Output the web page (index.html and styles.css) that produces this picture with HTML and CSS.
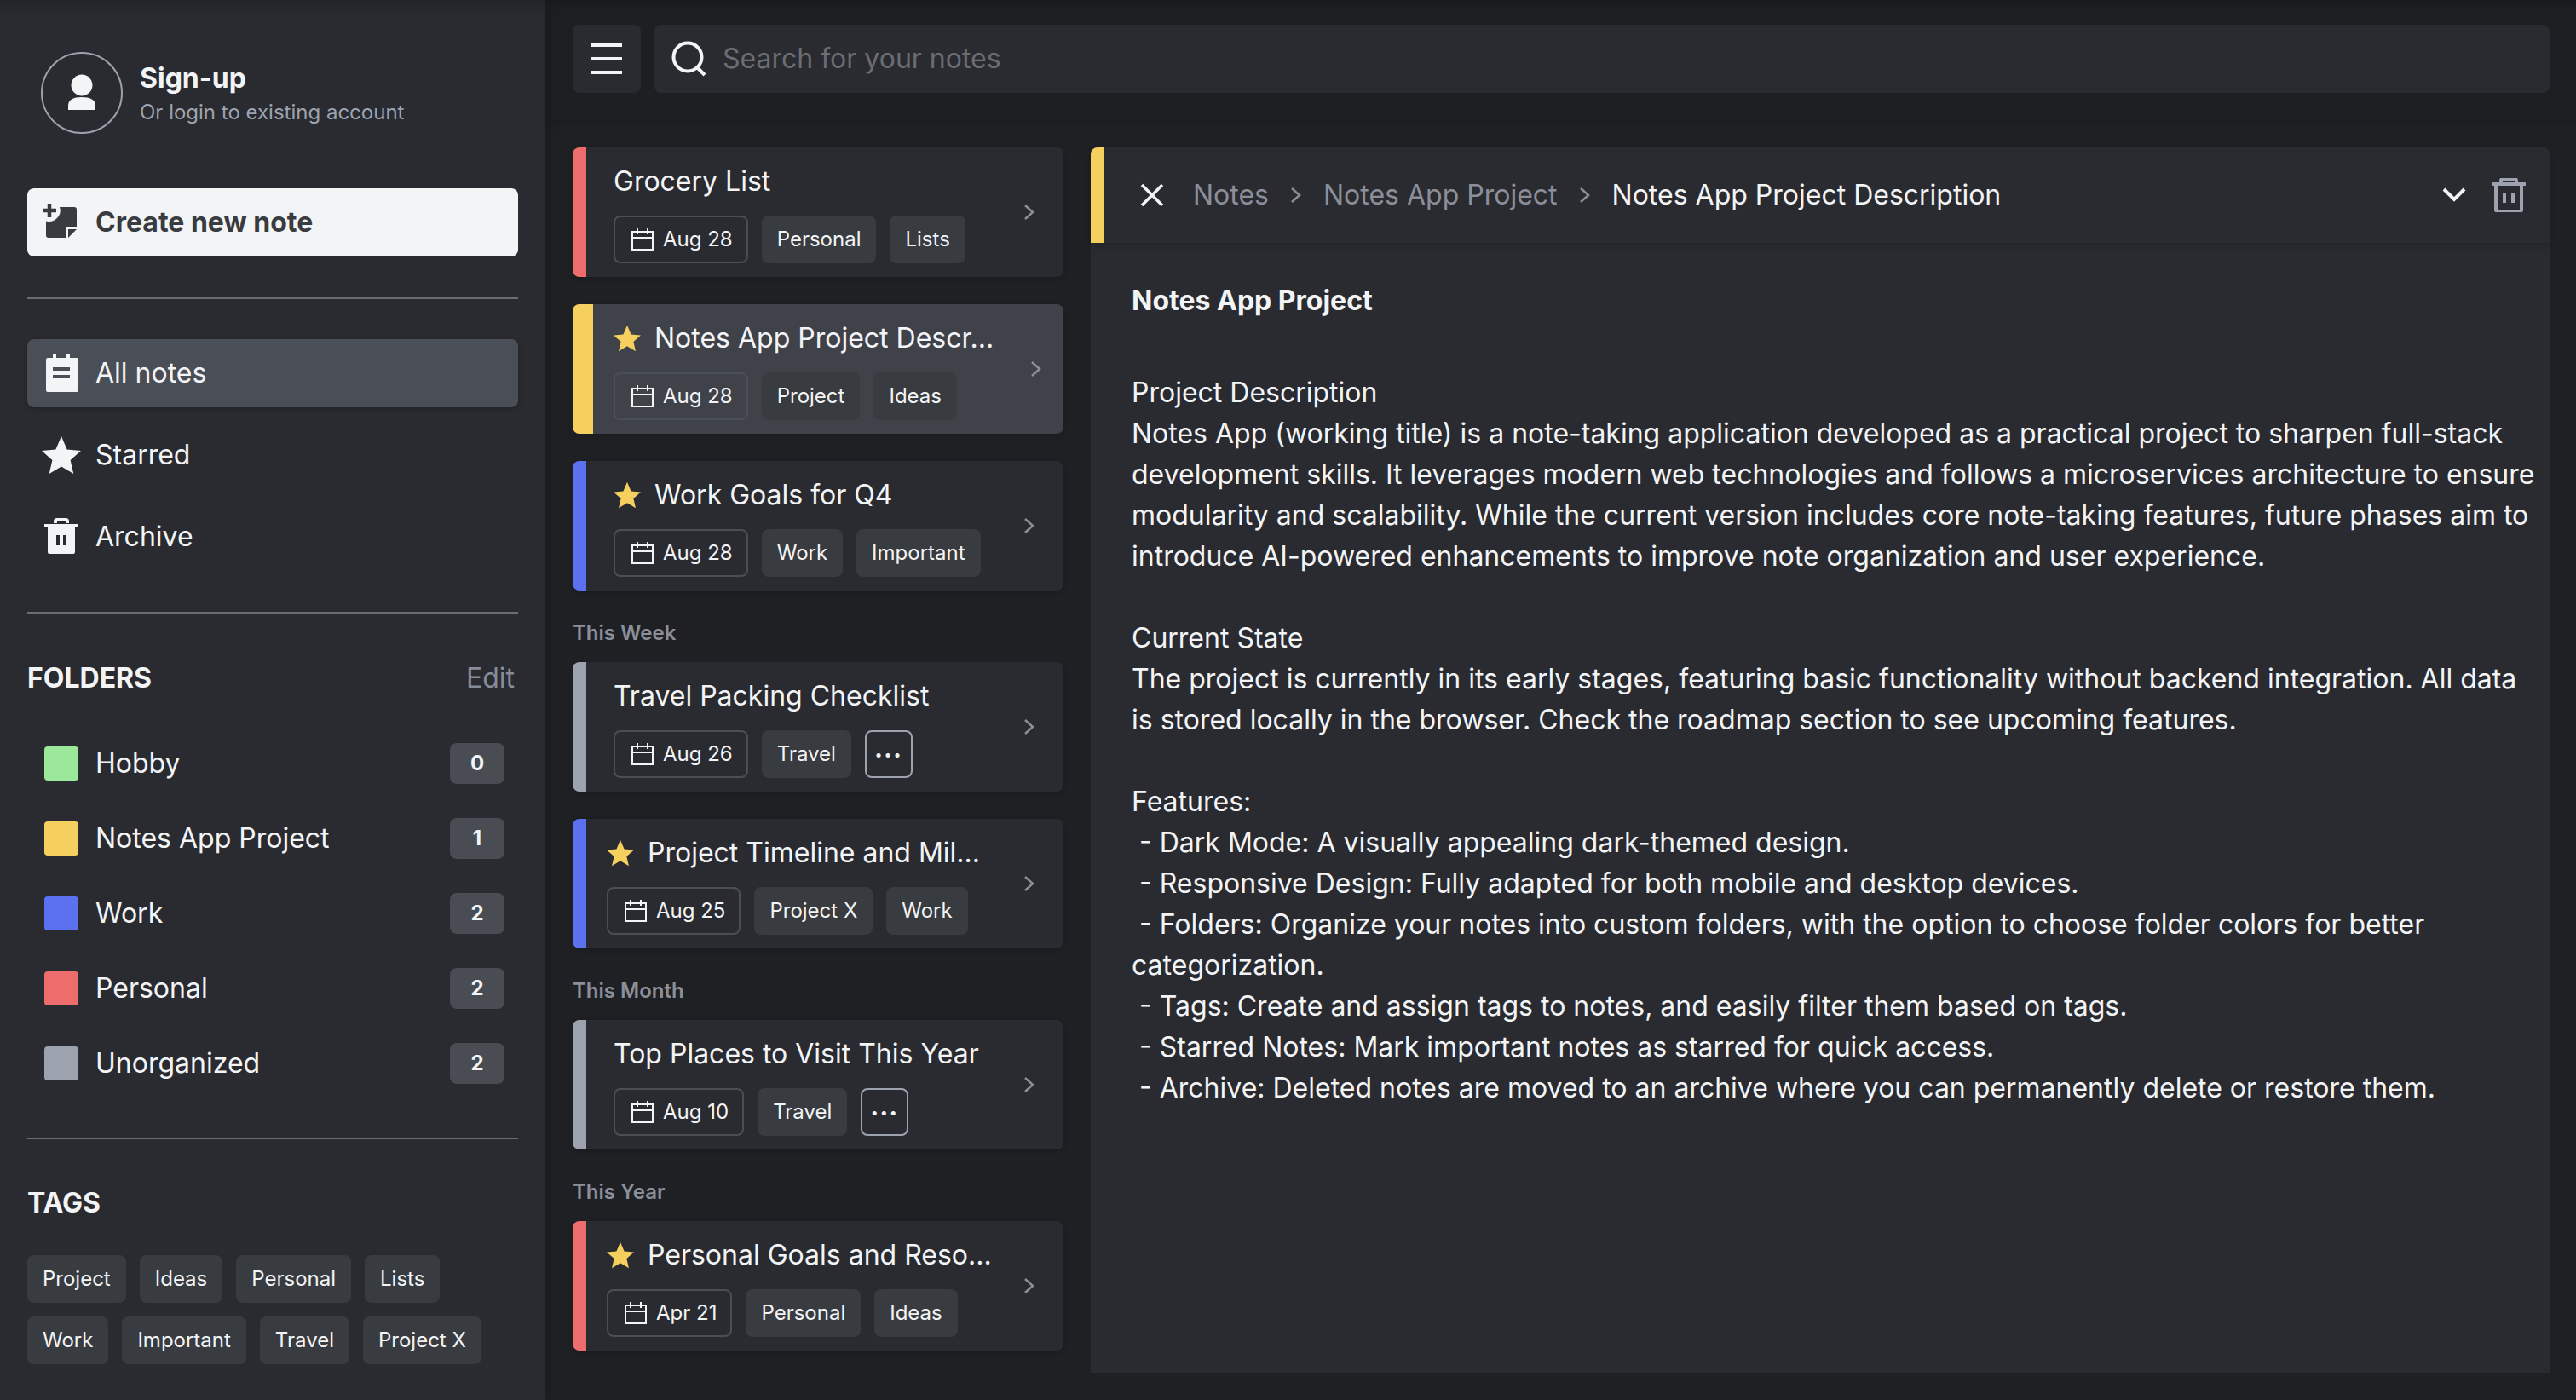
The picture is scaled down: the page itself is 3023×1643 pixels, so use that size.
FILE: index.html
```html
<!DOCTYPE html>
<html lang="en">
<head>
<meta charset="utf-8">
<title>Notes App</title>
<link rel="stylesheet" href="styles.css">
</head>
<body>
<svg class="defs" width="0" height="0" aria-hidden="true">
  <defs>
    <symbol id="star" viewBox="0 0 46 44"><path d="M23 0l6.6 15.4 16.4 1.5-12.4 11 3.700 16.100L23 35.400 8.700 44l3.700-16.100L0 16.900l16.400-1.500z"/></symbol>
    <symbol id="cal" viewBox="0 0 32 32"><path d="M4 7h24v21H4zM4 14h24M10 3v7M22 3v7" fill="none" stroke="currentColor" stroke-width="2"/></symbol>
    <symbol id="chev" viewBox="0 0 32 32"><path d="M11 8l9 8-9 8" fill="none" stroke="#8b8f99" stroke-width="2.500"/></symbol>
  </defs>
</svg>
<div class="app">
  <aside class="sidebar">
    <div class="profile">
      <div class="avatar">
        <svg viewBox="0 0 48 48" width="48" height="48"><circle cx="24" cy="15" r="12.500" fill="#f3f4f6"/><path d="M8 44v-5c0-7 6-10 16-10s16 3 16 10v5z" fill="#f3f4f6"/></svg>
      </div>
      <div class="profile-text">
        <div class="profile-name">Sign-up</div>
        <div class="profile-sub">Or login to existing account</div>
      </div>
    </div>
    <button class="create">
      <svg viewBox="0 0 48 48" width="48" height="48"><path d="M22 6H39a3 3 0 0 1 3 3V29H29V42H9a3 3 0 0 1-3-3V22.400A13 13 0 0 0 22 6z" fill="#383b40"/><path d="M2 10h16M10 2v16" stroke="#383b40" stroke-width="4.500" fill="none"/><path d="M32 32h10L32 42z" fill="#383b40"/></svg>
      <span>Create new note</span>
    </button>
    <hr class="rule rule-a">
    <nav class="nav">
      <a class="nav-item is-active">
        <svg viewBox="0 0 48 48" width="48" height="48"><path d="M14 2h4v4h12V2h4v4h8a2 2 0 0 1 2 2v36a2 2 0 0 1-2 2H8a2 2 0 0 1-2-2V8a2 2 0 0 1 2-2h6z" fill="#f3f4f6"/><path d="M14 19h20M14 28h20" stroke="#4a4e56" stroke-width="4"/></svg>
        <span>All notes</span>
      </a>
      <a class="nav-item">
        <svg viewBox="0 0 46 44" width="46" height="44"><use href="#star" fill="#f3f4f6"/></svg>
        <span>Starred</span>
      </a>
      <a class="nav-item">
        <svg viewBox="0 0 48 48" width="48" height="48"><path d="M17 8V6a2 2 0 0 1 2-2h10a2 2 0 0 1 2 2v2" fill="none" stroke="#f3f4f6" stroke-width="4"/><path d="M4 9h40v4H4z" fill="#f3f4f6"/><path fill-rule="evenodd" d="M8 13h32v29a2 2 0 0 1-2 2H10a2 2 0 0 1-2-2zM18 22v12h4V22zM26 22v12h4V22z" fill="#f3f4f6"/></svg>
        <span>Archive</span>
      </a>
    </nav>
    <hr class="rule rule-b">
    <div class="section-head">
      <span class="section-title">FOLDERS</span>
      <span class="section-edit">Edit</span>
    </div>
    <ul class="folders">
      <li class="folder"><i class="swatch c-green"></i><span class="folder-name">Hobby</span><b class="count">0</b></li>
      <li class="folder"><i class="swatch c-yellow"></i><span class="folder-name">Notes App Project</span><b class="count">1</b></li>
      <li class="folder"><i class="swatch c-blue"></i><span class="folder-name">Work</span><b class="count">2</b></li>
      <li class="folder"><i class="swatch c-red"></i><span class="folder-name">Personal</span><b class="count">2</b></li>
      <li class="folder"><i class="swatch c-gray"></i><span class="folder-name">Unorganized</span><b class="count">2</b></li>
    </ul>
    <hr class="rule rule-c">
    <div class="section-title tags-title">TAGS</div>
    <div class="tag-cloud">
      <span class="tag">Project</span><span class="tag">Ideas</span><span class="tag">Personal</span><span class="tag">Lists</span>
      <span class="tag">Work</span><span class="tag">Important</span><span class="tag">Travel</span><span class="tag">Project X</span>
    </div>
  </aside>
  <div class="main">
    <header class="topbar">
      <button class="burger"><svg viewBox="0 0 36 36" width="36" height="36"><path d="M0 2h36M0 18h36M0 34h36" stroke="#f3f4f6" stroke-width="4"/></svg></button>
      <div class="search">
        <svg viewBox="0 0 42 42" width="42" height="42"><circle cx="19" cy="19" r="16.500" fill="none" stroke="#f3f4f6" stroke-width="4"/><path d="M30 31l9 9" stroke="#f3f4f6" stroke-width="4"/></svg>
        <span class="placeholder">Search for your notes</span>
      </div>
    </header>
    <div class="content">
      <section class="list">
        <article class="card">
          <i class="stripe c-red"></i>
          <div class="card-body">
            <div class="card-title">Grocery List</div>
            <div class="chips"><span class="date"><svg width="32" height="32"><use href="#cal"/></svg>Aug 28</span><span class="tag">Personal</span><span class="tag">Lists</span></div>
          </div>
          <svg class="chev" width="32" height="32"><use href="#chev"/></svg>
        </article>
        <article class="card is-selected">
          <i class="stripe stripe-wide c-yellow"></i>
          <div class="card-body tight">
            <div class="card-title"><svg class="star" width="32" height="32"><use href="#star"/></svg>Notes App Project Descr...</div>
            <div class="chips"><span class="date"><svg width="32" height="32"><use href="#cal"/></svg>Aug 28</span><span class="tag">Project</span><span class="tag">Ideas</span></div>
          </div>
          <svg class="chev" width="32" height="32"><use href="#chev"/></svg>
        </article>
        <article class="card">
          <i class="stripe c-blue"></i>
          <div class="card-body">
            <div class="card-title"><svg class="star" width="32" height="32"><use href="#star"/></svg>Work Goals for Q4</div>
            <div class="chips"><span class="date"><svg width="32" height="32"><use href="#cal"/></svg>Aug 28</span><span class="tag">Work</span><span class="tag">Important</span></div>
          </div>
          <svg class="chev" width="32" height="32"><use href="#chev"/></svg>
        </article>
        <h3 class="group">This Week</h3>
        <article class="card">
          <i class="stripe c-gray"></i>
          <div class="card-body">
            <div class="card-title">Travel Packing Checklist</div>
            <div class="chips"><span class="date"><svg width="32" height="32"><use href="#cal"/></svg>Aug 26</span><span class="tag">Travel</span><span class="more">&#8226;&#8226;&#8226;</span></div>
          </div>
          <svg class="chev" width="32" height="32"><use href="#chev"/></svg>
        </article>
        <article class="card">
          <i class="stripe c-blue"></i>
          <div class="card-body tight">
            <div class="card-title"><svg class="star" width="32" height="32"><use href="#star"/></svg>Project Timeline and Mil...</div>
            <div class="chips"><span class="date"><svg width="32" height="32"><use href="#cal"/></svg>Aug 25</span><span class="tag">Project X</span><span class="tag">Work</span></div>
          </div>
          <svg class="chev" width="32" height="32"><use href="#chev"/></svg>
        </article>
        <h3 class="group">This Month</h3>
        <article class="card">
          <i class="stripe c-gray"></i>
          <div class="card-body">
            <div class="card-title">Top Places to Visit This Year</div>
            <div class="chips"><span class="date"><svg width="32" height="32"><use href="#cal"/></svg>Aug 10</span><span class="tag">Travel</span><span class="more">&#8226;&#8226;&#8226;</span></div>
          </div>
          <svg class="chev" width="32" height="32"><use href="#chev"/></svg>
        </article>
        <h3 class="group">This Year</h3>
        <article class="card">
          <i class="stripe c-red"></i>
          <div class="card-body tight">
            <div class="card-title"><svg class="star" width="32" height="32"><use href="#star"/></svg>Personal Goals and Reso...</div>
            <div class="chips"><span class="date"><svg width="32" height="32"><use href="#cal"/></svg>Apr 21</span><span class="tag">Personal</span><span class="tag">Ideas</span></div>
          </div>
          <svg class="chev" width="32" height="32"><use href="#chev"/></svg>
        </article>
      </section>
      <section class="detail">
        <header class="detail-head">
          <i class="stripe c-yellow"></i>
          <div class="crumbs">
            <svg class="close" viewBox="0 0 32 32" width="32" height="32"><path d="M4 4l24 24M28 4L4 28" stroke="#f3f4f6" stroke-width="3.500"/></svg>
            <span class="crumb">Notes</span>
            <svg width="32" height="32" class="sep"><use href="#chev"/></svg>
            <span class="crumb">Notes App Project</span>
            <svg width="32" height="32" class="sep"><use href="#chev"/></svg>
            <span class="crumb crumb-current">Notes App Project Description</span>
          </div>
          <svg class="down" viewBox="0 0 32 32" width="32" height="32"><path d="M4 9l12 12 12-12" fill="none" stroke="#f3f4f6" stroke-width="4"/></svg>
          <svg class="trash" viewBox="0 0 40 40" width="40" height="40"><path d="M11 5V3a2 2 0 0 1 2-2h14a2 2 0 0 1 2 2v2M0 7h40M5 7v30a2 2 0 0 0 2 2h26a2 2 0 0 0 2-2V7M15 17v12M25 17v12" fill="none" stroke="#9ca3af" stroke-width="4"/></svg>
        </header>
        <div class="detail-body"><strong class="doc-title">Notes App Project</strong>
Project Description
Notes App (working title) is a note-taking application developed as a practical project to sharpen full-stack development skills. It leverages modern web technologies and follows a microservices architecture to ensure modularity and scalability. While the current version includes core note-taking features, future phases aim to introduce AI-powered enhancements to improve note organization and user experience.

Current State
The project is currently in its early stages, featuring basic functionality without backend integration. All data is stored locally in the browser. Check the roadmap section to see upcoming features.

Features:
 - Dark Mode: A visually appealing dark-themed design.
 - Responsive Design: Fully adapted for both mobile and desktop devices.
 - Folders: Organize your notes into custom folders, with the option to choose folder colors for better categorization.
 - Tags: Create and assign tags to notes, and easily filter them based on tags.
 - Starred Notes: Mark important notes as starred for quick access.
 - Archive: Deleted notes are moved to an archive where you can permanently delete or restore them.</div>
      </section>
    </div>
  </div>
</div>
</body>
</html>
```
FILE: styles.css
```css
* { box-sizing: border-box; }
html, body { margin: 0; height: 100%; }
body {
  background: #1f2024;
  color: #f3f4f6;
  font-family: Inter, "Liberation Sans", sans-serif;
  font-size: 32px;
  line-height: 48px;
  overflow: hidden;
}
.defs { position: absolute; }
.app { display: flex; height: 1643px; }

.c-red { background: #ec6d6b; }
.c-yellow { background: #f6d05e; }
.c-blue { background: #5b71f0; }
.c-gray { background: #9ca3af; }
.c-green { background: #9be89b; }

/* Sidebar */
.sidebar {
  width: 640px;
  flex: none;
  padding: 62px 32px 0;
  background: #2a2b30;
  box-shadow: inset 0 22px 22px -22px rgba(0,0,0,.35), 4px 0 10px rgba(0,0,0,.15);
  display: flex;
  flex-direction: column;
  position: relative;
  z-index: 2;
}
.profile { display: flex; align-items: center; gap: 20px; margin-left: 16px; height: 94px; }
.avatar {
  width: 96px; height: 96px; flex: none;
  border: 2px solid #9ca3af; border-radius: 50%;
  display: flex; align-items: center; justify-content: center;
}
.profile-text { padding-top: 3px; }
.profile-name { font-size: 32px; font-weight: 700; line-height: 40px; }
.profile-sub { font-size: 24px; line-height: 36px; color: #9ca3af; margin-top: 2px; }
.create {
  margin-top: 65px;
  height: 80px;
  display: flex; align-items: center; gap: 16px;
  padding: 0 16px;
  border: 0; border-radius: 8px;
  background: #f3f4f6; color: #383b40;
  font: 650 32px/48px Inter, sans-serif;
}
.rule { width: 100%; height: 2px; margin: 0; border: 0; background: #6a6d75; flex: none; }
.rule-a { margin-top: 48px; }
.rule-b { margin-top: 48px; }
.rule-c { margin-top: 63px; }
.nav { display: flex; flex-direction: column; gap: 16px; margin-top: 47px; }
.nav-item { display: flex; align-items: center; gap: 16px; height: 80px; padding: 0 16px; border-radius: 8px; }
.nav-item svg { width: 48px; flex: none; }
.nav-item.is-active { background: #4a4e56; box-shadow: 0 2px 6px rgba(0,0,0,.2); }
.section-head { display: flex; justify-content: space-between; margin-top: 52px; padding-right: 4px; }
.section-title { font-weight: 700; }
.section-edit { color: #888c96; }
.folders { list-style: none; margin: 52px 0 0; padding: 0 16px 0 20px; display: flex; flex-direction: column; gap: 40px; }
.folder { display: flex; align-items: center; gap: 20px; height: 48px; }
.swatch { width: 40px; height: 40px; border-radius: 4px; flex: none; }
.stripe { flex: none; width: 16px; align-self: stretch; }
.stripe-wide { width: 24px; }
.folder-name { flex: 1; }
.count {
  width: 64px; height: 48px; border-radius: 8px; background: #494c53;
  font-size: 24px; font-weight: 700; line-height: 48px; text-align: center;
}
.tags-title { margin-top: 51px; }
.tag-cloud { display: flex; flex-wrap: wrap; gap: 16px; margin-top: 37px; }
.tag {
  display: inline-flex; align-items: center; height: 56px; padding: 0 18px;
  border-radius: 8px; background: #383b40;
  font-size: 24px; line-height: 36px; font-weight: 430;
}

/* Main */
.main { flex: 1; min-width: 0; display: flex; flex-direction: column; }
.topbar {
  height: 141px; flex: none;
  display: flex; gap: 16px; align-items: flex-start;
  padding: 29px 31px 0 32px;
  background: #1e1f23;
  box-shadow: inset 0 16px 16px -16px rgba(0,0,0,.3), 0 4px 8px rgba(0,0,0,.12);
  position: relative;
}
.burger {
  width: 80px; height: 80px; border: 0; border-radius: 8px; background: #2a2b30;
  display: flex; align-items: center; justify-content: center; padding: 0;
}
.search {
  flex: 1; height: 80px; border-radius: 8px; background: #2a2b30;
  display: flex; align-items: center; gap: 18px; padding: 0 20px;
}
.placeholder { color: #6b6d72; }
.content { flex: 1; min-height: 0; display: flex; gap: 32px; padding: 32px 31px 32px 32px; }

/* List */
.list { width: 576px; flex: none; display: flex; flex-direction: column; gap: 32px; }
.group {
  margin: 0 0 -16px;
  font-size: 24px; line-height: 36px; font-weight: 600; color: #8b8f99;
}
.card {
  height: 152px; display: flex; align-items: center;
  border-radius: 8px; overflow: hidden;
  background: #2a2b30;
  box-shadow: 0 2px 6px rgba(0,0,0,.2);
  flex: none;
}
.card.is-selected { background: #40424a; }
.card-body { flex: 1; min-width: 0; padding: 16px 0 16px 32px; display: flex; flex-direction: column; gap: 16px; }
.card-body.tight { padding-left: 24px; }
.card-title { display: flex; align-items: center; gap: 16px; font-size: 32px; line-height: 48px; white-space: nowrap; }
.star { fill: #f6d05e; flex: none; }
.chips { display: flex; gap: 16px; }
.date {
  display: inline-flex; align-items: center; gap: 8px; height: 56px; padding: 0 16px;
  border: 2px solid #4a4e56; border-radius: 8px;
  font-size: 24px; font-weight: 430;
}
.more {
  width: 56px; height: 56px; border: 2px solid #9ca3af; border-radius: 8px;
  display: inline-flex; align-items: center; justify-content: center;
  font-size: 16px; letter-spacing: 2px;
}
.chev { flex: none; margin: 0 24px 0 8px; }
.is-selected .chev { margin-right: 16px; }

/* Detail */
.detail { flex: 1; min-width: 0; background: #2a2b30; border-radius: 8px 8px 0 0; display: flex; flex-direction: column; }
.detail-head {
  height: 112px; flex: none; display: flex; align-items: center;
  border-radius: 8px 8px 0 0; overflow: hidden;
  background: #2a2b30;
  box-shadow: 0 3px 8px rgba(0,0,0,.18);
  padding-right: 28px;
}
.crumbs { flex: 1; display: flex; align-items: center; gap: 16px; padding-left: 40px; }
.close { margin-right: 16px; }
.crumb { color: #8b8f99; }
.crumb-current { color: #f3f4f6; }
.down { margin-right: 28px; }
.trash { flex: none; }
.detail-body { padding: 44px 16px 0 48px; white-space: pre-wrap; }
.doc-title { display: block; font-weight: 700; margin-bottom: 12px; }
```
